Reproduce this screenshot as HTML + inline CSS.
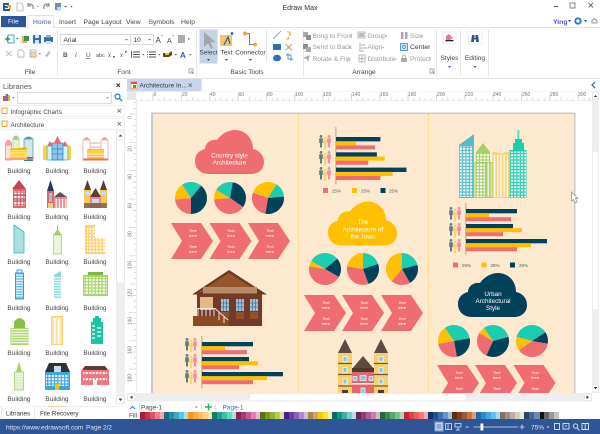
<!DOCTYPE html>
<html><head><meta charset="utf-8"><style>
html,body{margin:0;padding:0;background:#fff}
svg{display:block;font-family:"Liberation Sans",sans-serif}
.s{fill:none;stroke-width:16}
.n{stroke:#02415a}.c{stroke:#ef6c71}.y{stroke:#ffc000}.t{stroke:#1ccdb0}
.w{fill:#fff;text-anchor:middle}
.tt{font-size:4px;fill:#fff;text-anchor:middle}
.b{font-size:6.5px;fill:#444;text-anchor:middle}
.r{font-size:5px;fill:#777}
.g{font-size:6.6px;fill:#999}
.k{font-size:6.8px;fill:#333}
.l{font-size:6.6px;fill:#444;text-anchor:middle}
.q{font-size:4.5px;fill:#555}
</style></head><body>
<svg width="600" height="434" viewBox="0 0 600 434" xmlns="http://www.w3.org/2000/svg">
<defs>
<path id="cloud" d="M14 44C5 44 0 38 0 31C0 24 5 20 10 19C10 13 16 9 22 10C27 3 34 0 40 0C50 0 58 8 58 19C64 20 69 25 69 32C69 39 64 44 56 44Z"/>
<g id="chev"><path fill="#ef6c71" d="M0 0H30L42 18L30 36H0L11 18Z"/></g>
<g id="per"><circle cx="0" cy="1.4" r="1.4"/><path d="M-1.8 3.2H1.8V8H1V12.5H-1V8H-1.8Z"/></g>
<g id="ppl">
<use href="#per" x="0" fill="#5c7c80"/><use href="#per" x="4" y="1.5" fill="#fbd36e"/><use href="#per" x="8" fill="#f58aa0"/>
</g>
<g id="bars">
<rect y="0" width="51" height="4.3" fill="#02415a"/><rect y="4.2" width="23" height="4" fill="#ffc000"/><rect y="8.2" width="45" height="4" fill="#ef6c71"/>
<rect y="15" width="47" height="4.3" fill="#02415a"/><rect y="19.2" width="56" height="4" fill="#ffc000"/><rect y="23.2" width="37" height="4" fill="#ef6c71"/>
<rect y="30" width="81" height="4.3" fill="#02415a"/><rect y="34.2" width="65" height="4" fill="#ffc000"/><rect y="38.2" width="51" height="4" fill="#ef6c71"/>
</g>
<pattern id="gW" width="3.4" height="3.2" patternUnits="userSpaceOnUse"><rect x=".7" y=".6" width="2.2" height="2" fill="#fff"/></pattern>
<pattern id="gS" width="2.6" height="2.6" patternUnits="userSpaceOnUse"><rect y="1.5" width="2.6" height="1.1" fill="#fff"/></pattern>
<pattern id="gV" width="3.2" height="9" patternUnits="userSpaceOnUse"><rect x="1.2" width="1.2" height="9" fill="#fff"/></pattern>
<pattern id="rT" width="28.35" height="9" patternUnits="userSpaceOnUse"><path d="M.5 2V9M6.2 7V9M11.8 6V9M17.5 7V9M23.2 7V9" stroke="#bbb" stroke-width=".6"/></pattern>
<pattern id="rV" width="9" height="28.35" patternUnits="userSpaceOnUse"><path d="M2 .5H9M7 6.2H9M6 11.8H9M7 17.5H9M7 23.2H9" stroke="#bbb" stroke-width=".6"/></pattern>
<clipPath id="pg"><rect x="152" y="114" width="422" height="279"/></clipPath>
</defs>

<rect width="600" height="434" fill="#fff"/>

<!-- quick access -->
<path fill="#2f5597" d="M3 3H9V5H5V6H8V8H5V9H10V11H3Z"/><path fill="#f0a030" d="M7 5H11V9H9V7H7Z"/>
<path fill="#fff" stroke="#b0b0b0" stroke-width=".8" d="M17 3H21L23 5V11H17Z"/>
<path fill="none" stroke="#8a8a8a" stroke-width="1.2" d="M28 5C31 3 34 5 33 9M28 3V6H31"/>
<path fill="none" stroke="#8a8a8a" stroke-width="1.2" d="M49 5C46 3 43 5 44 9M49 3V6H46"/>
<rect x="37" y="6" width="2" height=".8" fill="#999"/>
<rect x="55" y="3" width="6" height="7" fill="#6d8fc0"/><rect x="57" y="7" width="4" height="4" fill="#c8d6ea"/>
<path fill="#555" d="M64 6H67L65.500 7.500ZM70.500 6H72.500L71.500 7.500Z"/>
<text x="300" y="10" font-size="7" fill="#333" text-anchor="middle">Edraw Max</text>
<rect x="554" y="6" width="4" height="1" fill="#555"/>
<rect x="570" y="3" width="5" height="5" fill="none" stroke="#666" stroke-width=".8"/>
<path d="M588.500 3L593 7.500M593 3L588.500 7.500" stroke="#666" stroke-width=".9"/>

<!-- tabs -->
<rect x="1" y="16" width="25" height="11" fill="#2f5597"/>
<text x="8" y="23.500" font-size="6.6" fill="#fff">File</text>
<path d="M0 27.500H28V15.500H53.500V27.500H600" fill="none" stroke="#dcdcdc" stroke-width=".8"/>
<text x="33" y="24" font-size="6.8" fill="#3b5fa0">Home</text>
<g font-size="6.8" fill="#444"><text x="59" y="24">Insert</text><text x="83.500" y="24">Page Layout</text><text x="126" y="24">View</text><text x="148.500" y="24">Symbols</text><text x="181" y="24">Help</text></g>
<text x="553" y="24" font-size="6.8" fill="#4a50e0" font-weight="bold">Ying</text>
<path d="M568 20H571L569.500 22Z" fill="#444"/>
<circle cx="578" cy="21" r="2.700" fill="none" stroke="#2a78c8" stroke-width="1.900"/>
<path d="M584 20H587L585.500 22Z" fill="#444"/>
<path d="M592 23V20.500L594.500 18.500L597 20.500V23Z" fill="none" stroke="#777" stroke-width=".8"/>

<!-- ribbon -->
<path d="M0 78.500H600" stroke="#dcdcdc" stroke-width=".8"/>
<path d="M57.500 30V76M196.500 30V76M266.500 30V62M303.500 30V76M436.500 30V76M460.500 30V76M488.500 30V76" stroke="#e2e2e2" stroke-width=".8"/>
<!-- file group icons -->
<rect x="8" y="35" width="6" height="8" fill="#fff" stroke="#3a8fc8" stroke-width=".9"/><path d="M5 39H10M7.500 36.500V41.500" stroke="#19a35a" stroke-width="1.500"/>
<path d="M16 38H18.500L17.250 39.500Z" fill="#555"/>
<path d="M22 36H27V43H22Z" fill="#f3b13c"/><path d="M24 36H29V41H24Z" fill="#3e8f60"/>
<rect x="33" y="35" width="8" height="8.500" fill="#2f6fb5"/><rect x="35" y="35" width="4" height="3" fill="#d6e4f2"/><rect x="35" y="40" width="4" height="3.500" fill="#d6e4f2"/>
<rect x="44" y="37" width="9" height="5" fill="#2f6fb5"/><rect x="46" y="35" width="5" height="2.500" fill="#9ab"/><rect x="46" y="41" width="5" height="3" fill="#cfe0ef"/>
<g fill="none" stroke="#bbb" stroke-width=".9"><path d="M6 51L12 56M12 51L6 56"/><path d="M18 50H22L24 52V57H18Z"/><path d="M30 50H36V57H30Z"/></g>
<rect x="31" y="52" width="5" height="5" fill="#f3d9a0" stroke="#999" stroke-width=".5"/>
<path d="M38.500 53H41L39.750 54.500Z" fill="#777"/>
<path d="M45 56L49 51L50.500 52.500L47 57Z" fill="#bbb"/>
<text class="l" x="30" y="74">File</text>
<!-- font -->
<rect x="60.500" y="34.500" width="93" height="10" fill="#fff" stroke="#d0d0d0" stroke-width=".8"/>
<path d="M130.500 34.500V44.500" stroke="#d0d0d0" stroke-width=".8"/>
<text x="63.500" y="41.800" font-size="6.500" fill="#333">Arial</text>
<text x="133.500" y="41.800" font-size="6.500" fill="#333">10</text>
<path d="M125 39H128L126.500 40.500ZM148 39H151L149.500 40.500Z" fill="#777"/>
<text x="155.500" y="43" font-size="8" fill="#444">A</text><text x="161" y="37" font-size="4" fill="#444">^</text>
<text x="167" y="43" font-size="7" fill="#444">A</text><text x="172" y="37" font-size="4" fill="#444">˅</text>
<path d="M178 36H185M178 38H185M178 40H185M178 42H185" stroke="#555" stroke-width="1.100"/><path d="M187.500 38.500H190L188.700 40Z" fill="#555"/>
<g fill="#555" font-size="6.500"><text x="63" y="57" font-weight="bold">B</text><text x="75" y="57" font-style="italic">I</text><text x="86" y="57" text-decoration="underline">U</text><text x="96" y="57" font-size="5.500">abc</text><text x="108" y="57" font-size="6">x</text><text x="120" y="57" font-size="6">x</text></g>
<rect x="113" y="56" width="1.600" height="1.600" fill="#555"/><rect x="125" y="51" width="1.600" height="1.600" fill="#555"/>
<path d="M133 52H140M133 54.500H140M133 57H140" stroke="#555" stroke-width=".9"/><path d="M131.500 51V58" stroke="#2a78c8" stroke-width="1"/>
<path d="M142 54H144.500L143.250 55.500ZM158 54H160.500L159.250 55.500ZM174.500 54H177L175.750 55.500ZM189 54H191.500L190.250 55.500Z" fill="#666"/>
<path d="M149 52H156M149 54.500H156M149 57H156" stroke="#555" stroke-width=".9"/><path d="M147 52H148M147 54.500H148M147 57H148" stroke="#2a78c8" stroke-width="1"/>
<path d="M163 53H169L172 51V55L169 57H163Z" fill="#4a4a3a"/><rect x="165" y="53" width="4" height="2" fill="#ffc000"/>
<text x="180" y="58" font-size="8" fill="#2f5fa8" font-weight="bold">A</text>
<text class="l" x="124" y="74">Font</text>
<path d="M189 69H193V73H189ZM191 71L194 74" fill="none" stroke="#888" stroke-width=".7"/>
<!-- basic tools -->
<rect x="199.500" y="29.500" width="18" height="34" fill="#c4d3e7"/>
<path d="M204 32L204 47L208 43.500L211 49L213 48L210.500 42.500L215.500 42Z" fill="#a3a6ab"/>
<text class="l" x="208.500" y="54.500">Select</text><path d="M207 59H210L208.500 61Z" fill="#444"/>
<rect x="220" y="35" width="12" height="11" fill="#f5c46c"/>
<path d="M224 45L228 37L230 44" fill="none" stroke="#2f5fa8" stroke-width="1.200"/>
<circle cx="232" cy="33.500" r="1.400" fill="#2f5fa8"/>
<text class="l" x="226.500" y="54.500">Text</text><path d="M225 59H228L226.500 61Z" fill="#444"/>
<path d="M245 33.500H249.500V44.500H254" fill="none" stroke="#2f5fa8" stroke-width=".8"/>
<circle cx="245" cy="33.500" r="2" fill="#f5a623"/><circle cx="255" cy="44.500" r="2" fill="#f5a623"/>
<text class="l" x="250.500" y="54.500">Connector</text><path d="M249 59H252L250.500 61Z" fill="#444"/>
<path d="M273 39L281 31" stroke="#7aa7d8" stroke-width=".9"/>
<path d="M287 32H290V35H288.500M288.500 37V39H286" fill="none" stroke="#f5a623" stroke-width="1.100"/>
<rect x="273" y="44" width="8" height="6" fill="#2f6fb5"/>
<path d="M285.500 44L292 50.500M292 44L285.500 50.500" stroke="#8aa8c8" stroke-width=".9"/><circle cx="288.700" cy="47.200" r="1.500" fill="#f5a623"/>
<ellipse cx="277" cy="58" rx="4" ry="3.300" fill="#2f6fb5"/>
<path d="M286 55H291V61M288 53V59H293" fill="none" stroke="#5a8ab8" stroke-width=".9"/>
<text class="l" x="247" y="74">Basic Tools</text>
<!-- arrange -->
<g fill="#a8a8a8">
<rect x="303" y="32" width="5" height="5"/><rect x="306" y="35" width="5" height="5" fill="#8e8e8e"/>
<rect x="303" y="44" width="5" height="5" fill="#8e8e8e"/><rect x="306" y="47" width="5" height="5"/>
<path d="M303 58L310 55L308 62L307 59Z"/>
</g>
<text class="g" x="312.500" y="38">Bring to Front</text><text class="g" x="312.500" y="49">Send to Back</text><text class="g" x="312.500" y="61">Rotate &amp; Flip</text>
<path d="M349 35.500H351.500L350.250 37ZM349 47H351.500L350.250 48.500ZM347 58.500H349.500L348.250 60Z" fill="#aaa"/>
<rect x="359" y="33" width="5" height="4" fill="#bbb"/><rect x="358" y="32" width="7" height="6" fill="none" stroke="#999" stroke-width=".7"/>
<path d="M360 43V52M361 45H365M361 48H367M361 51H364" stroke="#aaa" stroke-width=".9" fill="none"/>
<path d="M359 55H365V62H359ZM362 55V62M359 58.500H365" stroke="#aaa" stroke-width=".8" fill="none"/>
<text class="g" x="367.500" y="38">Group</text><text class="g" x="367.500" y="49">Align</text><text class="g" x="367.500" y="61">Distribute</text>
<path d="M385 35.500H387.500L386.250 37ZM382 47H384.500L383.250 48.500ZM394.500 58.500H397L395.750 60Z" fill="#aaa"/>
<rect x="401" y="32" width="2.500" height="7" fill="#aaa"/><rect x="405" y="32" width="2.500" height="7" fill="#aaa"/>
<rect x="400.500" y="43.500" width="7" height="7" fill="#cfe2f5" stroke="#3a86c8" stroke-width=".8"/><circle cx="404" cy="47" r="1.500" fill="none" stroke="#3a86c8" stroke-width=".7"/>
<rect x="401" y="58" width="6" height="4" fill="#aaa"/><path d="M402.500 58V56.500A1.500 1.500 0 0 1 405.500 56.500V58" fill="none" stroke="#aaa" stroke-width=".8"/>
<text class="g" x="410" y="38">Size</text><text class="k" x="410" y="49">Center</text><text class="g" x="410" y="61">Protect</text>
<path d="M421 35.500H423.500L422.250 37ZM429 58.500H431.500L430.250 60Z" fill="#aaa"/>
<text class="l" x="364" y="74">Arrange</text>
<path d="M430 69H434V73H430ZM432 71L435 74" fill="none" stroke="#888" stroke-width=".7"/>
<!-- styles / editing -->
<rect x="443" y="32" width="13" height="12" fill="#fff" stroke="#e4e4e4" stroke-width=".7"/>
<path d="M446 36L449 34L453 38L450 40H446Z" fill="#e6788c"/><rect x="445.500" y="40" width="8" height="1.300" fill="#222"/>
<text class="l" x="449.500" y="60">Styles</text><path d="M448 66H451L449.500 68Z" fill="#2f5fa8"/>
<rect x="468" y="32" width="14" height="12" fill="#fff" stroke="#e4e4e4" stroke-width=".7"/>
<path d="M471 42L472 35H474.500V38H475.500V35H478L479 42H476V39.500H474V42Z" fill="#2f5597"/>
<text class="l" x="475" y="60">Editing</text><path d="M473.500 66H476.500L475 68Z" fill="#2f5fa8"/>

<!-- left panel -->
<text x="3" y="89" font-size="7.500" fill="#555">Libraries</text>
<path d="M116.500 83.500L120 87M120 83.500L116.500 87" stroke="#333" stroke-width="1"/>
<rect x="3" y="96" width="2.500" height="5" fill="#e05050"/><rect x="5.500" y="94" width="2.500" height="7" fill="#4a7fc8"/><rect x="8" y="95" width="2" height="6" fill="#f5a623"/>
<path d="M12 97H14.500L13.250 98.500Z" fill="#777"/>
<rect x="17.500" y="92.500" width="94" height="11" fill="#fff" stroke="#d4d4d4" stroke-width=".8"/>
<path d="M106 97.500H109L107.500 99Z" fill="#777"/>
<circle cx="117.500" cy="96.500" r="2.500" fill="none" stroke="#2a78c8" stroke-width="1.200"/><path d="M119.500 98.500L122 101" stroke="#2a78c8" stroke-width="1.300"/>
<rect x=".5" y="105.500" width="124" height="11" fill="#fff" stroke="#ececec" stroke-width=".7"/>
<rect x=".5" y="118.500" width="124" height="11" fill="#fff" stroke="#ececec" stroke-width=".7"/>
<rect x="2" y="108" width="5" height="5.500" fill="#fff" stroke="#f0a030" stroke-width="1"/><rect x="2" y="121" width="5" height="5.500" fill="#fff" stroke="#f0a030" stroke-width="1"/>
<text x="10.500" y="114" font-size="6.300" fill="#444">Infographic Charts</text>
<text x="10.500" y="127" font-size="6.300" fill="#444">Architecture</text>
<path d="M117.500 109L121 112.500M121 109L117.500 112.500M117.500 122L121 125.500M121 122L117.500 125.500" stroke="#666" stroke-width=".8"/>
<!-- lib scrollbar -->
<rect x="116" y="131" width="9" height="273" fill="#eee"/>
<rect x="116.500" y="131" width="8" height="152" fill="#fff" stroke="#e0e0e0" stroke-width=".6"/>
<rect x="116.500" y="131" width="8" height="9" fill="#fff" stroke="#ddd" stroke-width=".6"/>
<path d="M118.500 136.500H122.500L120.500 134.500Z" fill="#444"/>
<rect x="116.500" y="396" width="8" height="8" fill="#fff" stroke="#ddd" stroke-width=".6"/>
<path d="M118.500 398.500H122.500L120.500 401Z" fill="#444"/>

<!-- thumbnails -->
<g>
<g fill="#fce0e0" stroke="#f08a90" stroke-width=".8"><rect x="5.500" y="143" width="6" height="17"/></g><circle cx="8.500" cy="143" r="3" fill="#f5a0a5"/>
<rect x="13" y="138" width="6" height="12" fill="#e5f2dc" stroke="#a8d08c" stroke-width=".8"/><circle cx="16" cy="138" r="2.500" fill="#a8d08c"/>
<rect x="24" y="139" width="9" height="20" fill="#cfe6ea" stroke="#5a9aa8" stroke-width=".8"/><path d="M24 139Q28.500 134 33 139Z" fill="#5a9aa8"/><rect x="24" y="157" width="9" height="4" fill="#3a7f90"/>
<rect x="10" y="149" width="17" height="11" fill="#ffd23a"/><path d="M10 150H27M10 153H27M10 156H27" stroke="#fff" stroke-width=".6"/><path d="M10 149L26 147L27 150H10Z" fill="#f5b800"/><rect x="5" y="158" width="28" height="2" fill="#f08a90" opacity=".6"/>
</g>
<g>
<rect x="43" y="146" width="6" height="14" fill="#ffd23a"/><rect x="66" y="146" width="5" height="14" fill="#ffd23a"/>
<rect x="47" y="146" width="7" height="14" fill="#d8f0ee" stroke="#33b0a8" stroke-width=".7"/><rect x="61" y="146" width="7" height="14" fill="#d8f0ee" stroke="#33b0a8" stroke-width=".7"/>
<rect x="52" y="143" width="11" height="17" fill="#8ec5ec" stroke="#2a8ac8" stroke-width=".7"/><path d="M53 160H62M57.500 143V160M52 149H63M52 154H63" stroke="#2a8ac8" stroke-width=".7"/>
<path d="M47 146L50 141L53 146ZM62 146L65 141L68 146ZM54 143L57.500 136L61 143Z" fill="#f0666a"/>
</g>
<g>
<rect x="83" y="140" width="7" height="20" fill="#fff" stroke="#f5a3a6" stroke-width=".8"/><rect x="101" y="140" width="7" height="20" fill="#fff" stroke="#f5a3a6" stroke-width=".8"/>
<path d="M83 140Q86.500 134 90 140ZM101 140Q104.500 134 108 140Z" fill="#f5a3a6"/><path d="M90 143H101M90 147H101" stroke="#f5a3a6"/>
<rect x="87" y="151" width="17" height="8" fill="#ffd23a"/><path d="M87 150H104" stroke="#f5b800" stroke-width="1.500"/><path d="M87 154H104M87 156.500H104" stroke="#fff" stroke-width=".5"/>
<rect x="83" y="158.500" width="25" height="2" fill="#f0666a"/>
</g>
<g>
<rect x="13" y="189" width="13" height="19" fill="#e0686c"/><path d="M12 189L19 180L26 189Z" fill="#c24850"/><rect x="14" y="191" width="11" height="15" fill="url(#gW)"/><path d="M13 195H26M13 200H26" stroke="#445" stroke-width=".7"/>
</g>
<g>
<rect x="47" y="191" width="7" height="17" fill="#e0686c"/><path d="M47 191L50.500 180L54 191Z" fill="#2b3a5c"/><rect x="49" y="193" width="3" height="9" fill="#8ec5ec"/><rect x="48" y="203" width="5" height="5" fill="#f8cf6c"/>
<rect x="54" y="197" width="13" height="11" fill="#f08a8a"/><path d="M54 197L60 192L67 197Z" fill="#555"/><rect x="54" y="199" width="13" height="9" fill="url(#gV)"/>
</g>
<g>
<rect x="84" y="190" width="7" height="18" fill="#f5c860"/><rect x="100" y="190" width="7" height="18" fill="#f5c860"/><rect x="90" y="197" width="11" height="11" fill="#f08a8a"/>
<path d="M84 190L87.500 180L91 190ZM100 190L103.500 180L107 190ZM90 197L95.500 188L101 197Z" fill="#5b3f35"/>
<rect x="85" y="192" width="5" height="3" fill="#bfe0f2"/><rect x="101" y="192" width="5" height="3" fill="#bfe0f2"/><rect x="92" y="199" width="7" height="4" fill="#bfe0f2"/><rect x="84" y="203" width="23" height="5" fill="#6b5040" opacity=".7"/>
</g>
<path d="M14 225L24 232V253H14Z" fill="#abe0e0" stroke="#3ab8b8" stroke-width=".8"/>
<g><rect x="53.500" y="235" width="8" height="19" fill="#e4f2d4" stroke="#a2d06c" stroke-width=".7"/><path d="M53 235L57.500 229L62 235Z" fill="#a2d06c"/><rect x="57" y="225" width="1" height="5" fill="#a2d06c"/><rect x="54" y="236" width="7" height="17" fill="url(#gS)" opacity=".5"/></g>
<g><path d="M85 225H95V238H105V254H85Z" fill="#fcd070"/><rect x="87" y="227" width="18" height="26" fill="url(#gW)" opacity=".9"/></g>
<g><rect x="15.500" y="273" width="8" height="26" fill="#6cbcec" stroke="#2088c8" stroke-width=".8"/><rect x="17" y="270" width="5" height="3" fill="none" stroke="#2088c8" stroke-width=".8"/><rect x="16" y="274" width="7" height="24" fill="url(#gS)"/></g>
<g><path d="M54 275L61 271V298H54Z" fill="#8ed8dc"/><rect x="54" y="276" width="7" height="22" fill="url(#gS)"/></g>
<g><rect x="83" y="275" width="25" height="21" fill="#a8d468"/><rect x="88" y="272" width="15" height="3" fill="#7fb848"/><rect x="84" y="277" width="23" height="18" fill="url(#gW)"/></g>
<g><rect x="10.500" y="328" width="18" height="17" fill="#a8d468"/><path d="M14 328V322Q19.500 314 25 322V328Z" fill="#84c04a"/><rect x="11" y="329" width="17" height="15" fill="url(#gS)"/></g>
<g><rect x="51.500" y="316.500" width="11" height="28" fill="#fde3a0" stroke="#fcc860" stroke-width=".8"/><rect x="54" y="318" width="1.500" height="26" fill="#fff"/><rect x="58" y="318" width="1.500" height="26" fill="#fff"/></g>
<g><rect x="91" y="322" width="12" height="22" fill="#1ac4a4"/><path d="M93 322V318H95V316H99V318H101V322Z" fill="#1ac4a4"/><path d="M92 326H95M92 330H95M92 334H95M92 338H95M97 328H101M97 332H101M97 336H101" stroke="#fff" stroke-width="1.200"/></g>
<g><rect x="14.500" y="372" width="9" height="18" fill="#d8ecbf" stroke="#a2d06c" stroke-width=".8"/><path d="M16 372L19 362L22 372Z" fill="#a2d06c"/><rect x="15" y="373" width="8" height="16" fill="url(#gS)" opacity=".6"/></g>
<g><rect x="45" y="372" width="25" height="18" fill="#3aa4e4"/><path d="M45 372L49 363H66L70 372Z" fill="#33302e"/><rect x="54" y="366" width="7" height="6" fill="#bfe0f2"/><rect x="46" y="374" width="23" height="12" fill="url(#gW)"/><rect x="55" y="384" width="4" height="6" fill="#ffc000"/></g>
<g><rect x="81" y="370" width="28" height="15" fill="#f0777c"/><path d="M82 370L85 366H105L108 370Z" fill="#5b3f35"/><rect x="83" y="372" width="24" height="3" fill="url(#gW)"/><rect x="83" y="378" width="24" height="3" fill="url(#gW)"/><rect x="93" y="380" width="4" height="5" fill="#fff"/></g>

<g class="b">
<text class="b" x="19" y="173">Building</text><text class="b" x="57" y="173">Building</text><text class="b" x="95" y="173">Building</text>
<text class="b" x="19" y="219">Building</text><text class="b" x="57" y="219">Building</text><text class="b" x="95" y="219">Building</text>
<text class="b" x="19" y="264">Building</text><text class="b" x="57" y="264">Building</text><text class="b" x="95" y="264">Building</text>
<text class="b" x="19" y="310">Building</text><text class="b" x="57" y="310">Building</text><text class="b" x="95" y="310">Building</text>
<text class="b" x="19" y="355">Building</text><text class="b" x="57" y="355">Building</text><text class="b" x="95" y="355">Building</text>
<text class="b" x="19" y="401">Building</text><text class="b" x="57" y="401">Building</text><text class="b" x="95" y="401">Building</text>
</g>
<!-- lib tabs -->
<path d="M0 406.500H126" stroke="#e4e4e4" stroke-width=".6"/>
<path d="M1.500 406.500V418.500H34.500V406.500" fill="#fff" stroke="#ddd" stroke-width=".6"/>
<rect x="48" y="406" width="18" height="1" fill="#fbd09a"/>
<text x="6" y="415.500" font-size="6.300" fill="#333">Libraries</text>
<text x="40" y="415.500" font-size="6.300" fill="#333">File Recovery</text>

<!-- doc tab -->
<rect x="127" y="79" width="74.500" height="12.500" fill="#c7d6ee"/>
<rect x="131" y="82" width="6" height="6.500" fill="#fff" stroke="#f0a030" stroke-width=".7"/><rect x="131" y="82" width="6" height="2" fill="#e05050"/><rect x="133" y="85" width="3" height="3" fill="#4aa05a"/>
<text x="139.500" y="87.500" font-size="6.500" fill="#333">Architecture In...</text>
<path d="M188.500 83.500L192 87M192 83.500L188.500 87" stroke="#667" stroke-width=".8"/>
<path d="M595 82L592 85L595 88" fill="none" stroke="#2a78c8" stroke-width="1.300"/>
<path d="M127 91.500H600" stroke="#e0e0e0" stroke-width=".6"/>

<!-- rulers -->
<rect x="127" y="92" width="9" height="8" fill="#e8e8e8"/>
<rect x="136" y="91.500" width="456" height="9" fill="#fff"/>
<g transform="translate(152.500 91.500)"><rect x="-16" width="455" height="9" fill="url(#rT)"/></g>
<path d="M136 100.500H592" stroke="#e0e0e0" stroke-width=".6"/>
<g class="r"><text class="r" x="153.500" y="96">0</text><text class="r" x="182" y="96">20</text><text class="r" x="210" y="96">40</text><text class="r" x="238.500" y="96">60</text><text class="r" x="267" y="96">80</text><text class="r" x="295" y="96">100</text><text class="r" x="323" y="96">120</text><text class="r" x="352" y="96">140</text><text class="r" x="380" y="96">160</text><text class="r" x="408" y="96">180</text><text class="r" x="437" y="96">200</text><text class="r" x="465" y="96">220</text><text class="r" x="493" y="96">240</text><text class="r" x="522" y="96">260</text><text class="r" x="550" y="96">280</text><text class="r" x="578" y="96">300</text></g>
<g transform="translate(127 113.500)"><rect y="-13" width="9" height="280" fill="url(#rV)"/></g>
<path d="M136.500 100V393" stroke="#e0e0e0" stroke-width=".6"/>
<g class="r" text-anchor="middle">
<text class="r" transform="translate(131.500 117.500) rotate(-90)">0</text>
<text class="r" transform="translate(131.500 149) rotate(-90)">20</text>
<text class="r" transform="translate(131.500 177) rotate(-90)">40</text>
<text class="r" transform="translate(131.500 205.500) rotate(-90)">60</text>
<text class="r" transform="translate(131.500 234) rotate(-90)">80</text>
<text class="r" transform="translate(131.500 265) rotate(-90)">100</text>
<text class="r" transform="translate(131.500 293) rotate(-90)">120</text>
<text class="r" transform="translate(131.500 321) rotate(-90)">140</text>
<text class="r" transform="translate(131.500 350) rotate(-90)">160</text>
<text class="r" transform="translate(131.500 378) rotate(-90)">180</text>
</g>

<!-- page -->
<rect x="151" y="112.500" width="424.500" height="282" fill="#c9c9c9"/>
<rect x="153" y="114" width="421" height="280" fill="#fde9d0"/>
<path d="M298.500 114V393M428.500 114V393" stroke="#fcd382" stroke-width="1" stroke-dasharray="2.500 1.500"/>

<g clip-path="url(#pg)">
<!-- clouds -->
<use href="#cloud" x="195" y="130" fill="#ef6c71"/>
<use href="#cloud" x="328" y="201.500" fill="#ffc000"/>
<use href="#cloud" x="458" y="273" fill="#02415a"/>
<g font-size="6.300" fill="#fff" text-anchor="middle">
<text class="w" x="229.500" y="157.500">Country style</text><text class="w" x="229.500" y="164.500">Architecture</text>
<text class="w" x="363" y="224">The</text><text class="w" x="363" y="231.500">Architecture of</text><text class="w" x="363" y="238.500">the Town</text>
<text class="w" x="493" y="296">Urban</text><text class="w" x="493" y="303">Architectural</text><text class="w" x="493" y="310">Style</text>
</g>

<!-- pies -->
<g transform="translate(191 198)"><circle class="s t" r="8" pathLength="360" stroke-dasharray="74 360" transform="rotate(236)"/><circle class="s n" r="8" pathLength="360" stroke-dasharray="140 360" transform="rotate(-50)"/><circle class="s c" r="8" pathLength="360" stroke-dasharray="85 360" transform="rotate(90)"/><circle class="s y" r="8" pathLength="360" stroke-dasharray="61 360" transform="rotate(175)"/></g>
<g transform="translate(230 198)"><circle class="s t" r="8" pathLength="360" stroke-dasharray="70 360" transform="rotate(210)"/><circle class="s n" r="8" pathLength="360" stroke-dasharray="115 360" transform="rotate(-80)"/><circle class="s c" r="8" pathLength="360" stroke-dasharray="140 360" transform="rotate(35)"/><circle class="s y" r="8" pathLength="360" stroke-dasharray="35 360" transform="rotate(175)"/></g>
<g transform="translate(268 198)"><circle class="s y" r="8" pathLength="360" stroke-dasharray="102 360" transform="rotate(200)"/><circle class="s t" r="8" pathLength="360" stroke-dasharray="53 360" transform="rotate(-58)"/><circle class="s n" r="8" pathLength="360" stroke-dasharray="105 360" transform="rotate(-5)"/><circle class="s c" r="8" pathLength="360" stroke-dasharray="100 360" transform="rotate(100)"/></g>
<g transform="translate(325 269)"><circle class="s t" r="8" pathLength="360" stroke-dasharray="110 360" transform="rotate(210)"/><circle class="s n" r="8" pathLength="360" stroke-dasharray="70 360" transform="rotate(-40)"/><circle class="s c" r="8" pathLength="360" stroke-dasharray="160 360" transform="rotate(30)"/><circle class="s y" r="8" pathLength="360" stroke-dasharray="20 360" transform="rotate(190)"/></g>
<g transform="translate(363 269)"><circle class="s t" r="8" pathLength="360" stroke-dasharray="72 360" transform="rotate(-90)"/><circle class="s n" r="8" pathLength="360" stroke-dasharray="88 360" transform="rotate(-18)"/><circle class="s c" r="8" pathLength="360" stroke-dasharray="120 360" transform="rotate(70)"/><circle class="s y" r="8" pathLength="360" stroke-dasharray="80 360" transform="rotate(190)"/></g>
<g transform="translate(402 269)"><circle class="s t" r="8" pathLength="360" stroke-dasharray="75 360" transform="rotate(-90)"/><circle class="s n" r="8" pathLength="360" stroke-dasharray="75 360" transform="rotate(-15)"/><circle class="s c" r="8" pathLength="360" stroke-dasharray="70 360" transform="rotate(60)"/><circle class="s y" r="8" pathLength="360" stroke-dasharray="140 360" transform="rotate(130)"/></g>
<g transform="translate(454 341)"><circle class="s t" r="8" pathLength="360" stroke-dasharray="115 360" transform="rotate(235)"/><circle class="s n" r="8" pathLength="360" stroke-dasharray="90 360" transform="rotate(-10)"/><circle class="s c" r="8" pathLength="360" stroke-dasharray="90 360" transform="rotate(80)"/><circle class="s y" r="8" pathLength="360" stroke-dasharray="65 360" transform="rotate(170)"/></g>
<g transform="translate(493 341)"><circle class="s t" r="8" pathLength="360" stroke-dasharray="110 360" transform="rotate(235)"/><circle class="s n" r="8" pathLength="360" stroke-dasharray="130 360" transform="rotate(-15)"/><circle class="s c" r="8" pathLength="360" stroke-dasharray="95 360" transform="rotate(115)"/><circle class="s y" r="8" pathLength="360" stroke-dasharray="25 360" transform="rotate(210)"/></g>
<g transform="translate(532 341)"><circle class="s t" r="8" pathLength="360" stroke-dasharray="132 360" transform="rotate(195)"/><circle class="s n" r="8" pathLength="360" stroke-dasharray="43 360" transform="rotate(-33)"/><circle class="s c" r="8" pathLength="360" stroke-dasharray="135 360" transform="rotate(10)"/><circle class="s y" r="8" pathLength="360" stroke-dasharray="50 360" transform="rotate(145)"/></g>

<!-- chevrons -->
<use href="#chev" x="171" y="223"/><use href="#chev" x="209.500" y="223"/><use href="#chev" x="248" y="223"/>
<use href="#chev" x="304" y="295"/><use href="#chev" x="342" y="295"/><use href="#chev" x="381" y="295"/>
<use href="#chev" x="437" y="365"/><use href="#chev" x="475" y="365"/><use href="#chev" x="513.500" y="365"/>
<text class="tt" x="193" y="232">Text</text><text class="tt" x="193" y="237">here</text><text class="tt" x="193" y="248">Text</text><text class="tt" x="193" y="253">here</text>
<text class="tt" x="231" y="232">Text</text><text class="tt" x="231" y="237">here</text><text class="tt" x="231" y="248">Text</text><text class="tt" x="231" y="253">here</text>
<text class="tt" x="270" y="232">Text</text><text class="tt" x="270" y="237">here</text><text class="tt" x="270" y="248">Text</text><text class="tt" x="270" y="253">here</text>
<text class="tt" x="326" y="304">Text</text><text class="tt" x="326" y="309">here</text><text class="tt" x="326" y="320">Text</text><text class="tt" x="326" y="325">here</text>
<text class="tt" x="364" y="304">Text</text><text class="tt" x="364" y="309">here</text><text class="tt" x="364" y="320">Text</text><text class="tt" x="364" y="325">here</text>
<text class="tt" x="402" y="304">Text</text><text class="tt" x="402" y="309">here</text><text class="tt" x="402" y="320">Text</text><text class="tt" x="402" y="325">here</text>
<text class="tt" x="459" y="374">Text</text><text class="tt" x="459" y="379">here</text><text class="tt" x="459" y="390">Text</text>
<text class="tt" x="497" y="374">Text</text><text class="tt" x="497" y="379">here</text><text class="tt" x="497" y="390">Text</text>
<text class="tt" x="535" y="374">Text</text><text class="tt" x="535" y="379">here</text><text class="tt" x="535" y="390">Text</text>

<!-- bar charts -->
<g transform="translate(202 342)"><rect x="-.5" y="-6" width=".8" height="52" fill="#9a9488"/><use href="#bars"/><use href="#ppl" x="-15" y="-4"/><use href="#ppl" x="-15" y="12"/><use href="#ppl" x="-15" y="28"/></g>
<g transform="translate(336 137)"><rect x="-.5" y="-10" width=".8" height="57" fill="#9a9488"/><use href="#bars" transform="scale(.87 1.02)"/><use href="#ppl" x="-15" y="-2"/><use href="#ppl" x="-15" y="14"/><use href="#ppl" x="-15" y="30"/></g>
<g transform="translate(466 209)"><rect x="-.5" y="-6" width=".8" height="52" fill="#9a9488"/><use href="#bars"/><use href="#ppl" x="-15" y="-2"/><use href="#ppl" x="-15" y="14"/><use href="#ppl" x="-15" y="30"/></g>
<!-- legends -->
<rect x="323" y="188" width="5" height="5" fill="#ef6c71"/><rect x="352" y="188" width="5" height="5" fill="#ffc000"/><rect x="380.500" y="188" width="5" height="5" fill="#02415a"/>
<text class="q" x="332" y="192.500">25%</text><text class="q" x="361" y="192.500">25%</text><text class="q" x="389" y="192.500">25%</text>
<rect x="453" y="262.500" width="5" height="5" fill="#ef6c71"/><rect x="481.500" y="262.500" width="5" height="5" fill="#ffc000"/><rect x="510" y="262.500" width="5" height="5" fill="#02415a"/>
<text class="q" x="462" y="267">25%</text><text class="q" x="490.500" y="267">25%</text><text class="q" x="519" y="267">25%</text>

<!-- house -->
<rect x="197" y="293" width="65" height="33" fill="#75392a"/>
<path d="M192 294.500L229 270L267 294.500Z" fill="#6b3a1c"/><path d="M199 292L229 273L259 292Z" fill="#96552a"/>
<rect x="203" y="287" width="54" height="6.500" fill="#b88a68"/>
<rect x="200" y="297" width="13" height="13" fill="#e3b98a"/>
<g fill="#9cc3dc"><rect x="221" y="299" width="8" height="12"/><rect x="236" y="299" width="8" height="12"/><rect x="250" y="299" width="8" height="12"/></g>
<path d="M223.700 299V311M226.400 299V311M238.700 299V311M241.400 299V311M252.700 299V311M255.400 299V311M221 303H229M221 307H229M236 303H244M236 307H244M250 303H258M250 307H258" stroke="#33495a" stroke-width=".5"/>
<g fill="#94502a"><rect x="221" y="312" width="8" height="7"/><rect x="236" y="312" width="8" height="7"/><rect x="250" y="312" width="8" height="7"/></g>
<rect x="193" y="316" width="36" height="10" fill="#8c4a24"/>
<path d="M193.500 308.500H215L228 320M194 308.500V316M198 308.500V316M202 308.500V316M206 308.500V316M210 308.500V316M214 308.500V316M219 312V320M224 317V323" fill="none" stroke="#ece8e0" stroke-width="1"/>

<!-- church -->
<rect x="338" y="353" width="14" height="42" fill="#f9cf6e"/><rect x="374" y="353" width="14" height="42" fill="#f9cf6e"/>
<path d="M338 353L345 339L352 353ZM374 353L381 339L388 353Z" fill="#5e4a43"/>
<path d="M338 363.500H352M338 374.500H352M338 386H352M374 363.500H388M374 374.500H388M374 386H388" stroke="#6e5a38" stroke-width="1.200"/>
<rect x="352" y="372" width="22" height="23" fill="#e8636a"/>
<path d="M352 369L363 356L374 369V372H352Z" fill="#5e4a43"/><rect x="352" y="368" width="22" height="4" fill="#4a3a34"/>
<rect x="352" y="383" width="22" height="1.500" fill="#fff"/>
<g fill="#7fc8ef" stroke="#fff" stroke-width=".7"><rect x="343" y="356.500" width="4" height="5"/><rect x="343" y="367.500" width="4" height="5"/><rect x="343" y="379" width="4" height="5"/><rect x="379" y="356.500" width="4" height="5"/><rect x="379" y="367.500" width="4" height="5"/><rect x="379" y="379" width="4" height="5"/><rect x="360" y="375.500" width="6" height="5"/><rect x="353" y="376.500" width="4" height="4"/><rect x="369" y="376.500" width="4" height="4"/><rect x="361" y="388" width="4" height="6"/></g>
<rect x="342" y="390" width="6" height="4" fill="#4a3a34"/><rect x="378" y="390" width="6" height="4" fill="#4a3a34"/>

<!-- city -->
<path d="M459 145L474 134V198H459Z" fill="#54bcc5"/><rect x="459.500" y="146" width="14" height="51" fill="url(#gW)"/>
<path d="M476 152L483 143L490 152Z" fill="#a6d06a"/><rect x="476" y="152" width="14" height="11" fill="#a6d06a"/><rect x="474.500" y="162" width="18" height="36" fill="#a6d06a"/><rect x="477" y="153" width="12" height="9" fill="url(#gW)"/><rect x="475" y="163" width="10" height="34" fill="url(#gW)"/><rect x="486" y="163" width="5.500" height="34" fill="url(#gV)"/>
<rect x="492.500" y="153" width="16.500" height="45" fill="#fcd47e"/><rect x="492.500" y="152" width="5" height="2" fill="#fcd47e"/><rect x="504" y="152" width="5" height="2" fill="#fcd47e"/><rect x="494" y="155" width="14" height="42" fill="url(#gV)"/>
<rect x="517.500" y="130" width="1.800" height="10" fill="#56d8c4"/><path d="M513 150V143H515V139H522V143H524V150Z" fill="#1ccdb0"/><rect x="509.500" y="150" width="17" height="48" fill="#1ccdb0"/><rect x="510" y="151.500" width="16" height="46" fill="url(#gW)"/>
</g>

<!-- cursor -->
<path d="M571.500 192V201L573.500 199.500L575 203L577 202L575.500 198.500L578 198.500Z" fill="#fff" stroke="#8a8a8a" stroke-width=".7"/>

<!-- v scrollbar -->
<rect x="592" y="92" width="7" height="301" fill="#eee"/>
<rect x="592.500" y="151" width="6" height="159" fill="#fff" stroke="#ddd" stroke-width=".5"/>
<rect x="592.500" y="92" width="6" height="7" fill="#fff" stroke="#ddd" stroke-width=".5"/><path d="M593.800 97H597.200L595.500 95Z" fill="#333"/>
<rect x="592.500" y="385" width="6" height="7" fill="#fff" stroke="#ddd" stroke-width=".5"/><path d="M593.800 387H597.200L595.500 389.500Z" fill="#333"/>
<!-- h scrollbar -->
<rect x="127" y="393" width="465" height="8.500" fill="#eee"/>
<rect x="249.500" y="393.500" width="217" height="7.500" fill="#fff" stroke="#ddd" stroke-width=".5"/>
<rect x="127.500" y="394" width="7" height="6.500" fill="#fff" stroke="#ddd" stroke-width=".5"/><path d="M132.500 395.500V399L130 397.200Z" fill="#333"/>
<rect x="584.500" y="394" width="7" height="6.500" fill="#fff" stroke="#ddd" stroke-width=".5"/><path d="M586.500 395.500V399L589 397.200Z" fill="#333"/>

<!-- page tabs -->
<path d="M130 409L132.500 406.500L135 409" fill="none" stroke="#2a78c8" stroke-width="1"/>
<path d="M139.500 403V411" stroke="#bbb" stroke-width=".6"/>
<text x="141" y="409.500" font-size="6.500" fill="#444">Page-1</text>
<path d="M195 406.500H197.500L196.250 408Z" fill="#666"/>
<path d="M201.500 404V410M215.500 404V410" stroke="#ccc" stroke-width=".6"/>
<path d="M205 407H212M208.500 403.500V410.500" stroke="#1fb35a" stroke-width="1.400"/>
<text x="222.500" y="409.500" font-size="6.500" fill="#3a66c0">Page-1</text>

<!-- Fill + swatches -->
<text x="129" y="417.500" font-size="6.300" fill="#444">Fill</text>
<g shape-rendering="crispEdges">
<g transform="translate(140 412)"><rect width="5" height="7" fill="#a31d36"/><rect x="5" width="5" height="7" fill="#c9304b"/><rect x="10" width="5" height="7" fill="#e0526a"/><rect x="15" width="5" height="7" fill="#ec7d8e"/><rect x="20" width="4" height="7" fill="#f3a7b3"/></g>
<g transform="translate(164 412)"><rect width="5" height="7" fill="#1d6a7e"/><rect x="5" width="5" height="7" fill="#2b8ba0"/><rect x="10" width="5" height="7" fill="#3fa9bd"/><rect x="15" width="5" height="7" fill="#6cc5d5"/><rect x="20" width="4" height="7" fill="#a5e2ec"/></g>
<g transform="translate(188 412)"><rect width="5" height="7" fill="#f39a1e"/><rect x="5" width="5" height="7" fill="#f7ad3c"/><rect x="10" width="5" height="7" fill="#fac060"/><rect x="15" width="5" height="7" fill="#fcd180"/><rect x="20" width="4" height="7" fill="#fde3a8"/></g>
<g transform="translate(212 412)"><rect width="5" height="7" fill="#0f7d6a"/><rect x="5" width="5" height="7" fill="#1fa088"/><rect x="10" width="5" height="7" fill="#3ac2a8"/><rect x="15" width="5" height="7" fill="#6dd4bf"/><rect x="20" width="4" height="7" fill="#a6e5d8"/></g>
<g transform="translate(236 412)"><rect width="5" height="7" fill="#8e1f55"/><rect x="5" width="5" height="7" fill="#ab3a75"/><rect x="10" width="5" height="7" fill="#c45a94"/><rect x="15" width="5" height="7" fill="#dc7fb4"/><rect x="20" width="4" height="7" fill="#efb4d4"/></g>
<g transform="translate(260 412)"><rect width="5" height="7" fill="#5a7314"/><rect x="5" width="5" height="7" fill="#7d961e"/><rect x="10" width="5" height="7" fill="#9cb236"/><rect x="15" width="5" height="7" fill="#b8cb5c"/><rect x="20" width="4" height="7" fill="#d7e29a"/></g>
<g transform="translate(284 412)"><rect width="5" height="7" fill="#4a1f82"/><rect x="5" width="5" height="7" fill="#6b3f9e"/><rect x="10" width="5" height="7" fill="#8b62b6"/><rect x="15" width="5" height="7" fill="#ab8ccd"/><rect x="20" width="4" height="7" fill="#cdbce2"/></g>
<g transform="translate(308 412)"><rect width="5" height="7" fill="#a8864e"/><rect x="5" width="5" height="7" fill="#c8a96e"/><rect x="10" width="5" height="7" fill="#f5d000"/><rect x="15" width="5" height="7" fill="#fae04a"/><rect x="20" width="4" height="7" fill="#fdf09a"/></g>
<g transform="translate(332 412)"><rect width="5" height="7" fill="#006d66"/><rect x="5" width="5" height="7" fill="#13908a"/><rect x="10" width="5" height="7" fill="#3fb0a8"/><rect x="15" width="5" height="7" fill="#7ccac4"/><rect x="20" width="4" height="7" fill="#b2e2de"/></g>
<g transform="translate(356 412)"><rect width="5" height="7" fill="#6b2458"/><rect x="5" width="5" height="7" fill="#8a4074"/><rect x="10" width="5" height="7" fill="#a85f92"/><rect x="15" width="5" height="7" fill="#c283ad"/><rect x="20" width="4" height="7" fill="#dcaed0"/></g>
<g transform="translate(380 412)"><rect width="5" height="7" fill="#1f6b3a"/><rect x="5" width="5" height="7" fill="#3b8a52"/><rect x="10" width="5" height="7" fill="#5ba76f"/><rect x="15" width="5" height="7" fill="#80c08e"/><rect x="20" width="4" height="7" fill="#aed7b6"/></g>
<g transform="translate(404 412)"><rect width="5" height="7" fill="#c2272d"/><rect x="5" width="5" height="7" fill="#de4046"/><rect x="10" width="5" height="7" fill="#ef5b5f"/><rect x="15" width="5" height="7" fill="#f67d7f"/><rect x="20" width="4" height="7" fill="#fbaaa5"/></g>
<g transform="translate(428 412)"><rect width="5" height="7" fill="#12306e"/><rect x="5" width="5" height="7" fill="#234d8f"/><rect x="10" width="5" height="7" fill="#3e6fb0"/><rect x="15" width="5" height="7" fill="#6b93cb"/><rect x="20" width="4" height="7" fill="#a3bfe0"/></g>
<g transform="translate(452 412)"><rect width="5" height="7" fill="#5e2d10"/><rect x="5" width="5" height="7" fill="#7f3f1a"/><rect x="10" width="5" height="7" fill="#a4562c"/><rect x="15" width="5" height="7" fill="#c8714a"/><rect x="20" width="4" height="7" fill="#e09a80"/></g>
<g transform="translate(476 412)"><rect width="5" height="7" fill="#1a6fa8"/><rect x="5" width="5" height="7" fill="#2a8bc8"/><rect x="10" width="5" height="7" fill="#44a5e0"/><rect x="15" width="5" height="7" fill="#6cbcec"/><rect x="20" width="4" height="7" fill="#a5d7f5"/></g>
<g transform="translate(500 412)"><rect width="5" height="7" fill="#7e7468"/><rect x="5" width="5" height="7" fill="#9c9285"/><rect x="10" width="5" height="7" fill="#b9b0a3"/><rect x="15" width="5" height="7" fill="#d5cec2"/><rect x="20" width="4" height="7" fill="#ebe6dc"/></g>
<g transform="translate(524 412)"><rect width="5" height="7" fill="#2d4468"/><rect x="5" width="5" height="7" fill="#49648f"/><rect x="10" width="6" height="7" fill="#6c8ab5"/><rect x="16" width="4" height="7" fill="#111"/><rect x="20" width="5" height="7" fill="#666"/><rect x="25" width="5" height="7" fill="#999"/><rect x="30" width="5" height="7" fill="#c4c4c4"/></g>
</g>

<!-- status bar -->
<rect y="419" width="600" height="15" fill="#2f5597"/>
<text x="6" y="429.500" font-size="6.500" fill="#dfe7f5">https://www.edrawsoft.com</text>
<text x="86" y="429.500" font-size="6.500" fill="#dfe7f5">Page 2/2</text>
<rect x="434.500" y="421.500" width="9" height="10" fill="#8ea8d4"/><rect x="436" y="423.500" width="6" height="6" fill="none" stroke="#dfe7f5" stroke-width=".8"/>
<g fill="none" stroke="#dfe7f5" stroke-width=".8"><path d="M445.500 423.500H451.500V429.500H445.500ZM448 423.500V429.500"/><path d="M455 423.500H461V427H455ZM458 427V430M456 430H460"/></g>
<path d="M465.500 427H469M519.500 427H524.500M522 424.500V429.500" stroke="#dfe7f5" stroke-width=".8"/>
<path d="M473.500 427H518" stroke="#dfe7f5" stroke-width=".8"/><rect x="480.500" y="423.500" width="2.800" height="7" fill="#fff"/>
<text x="531" y="429.500" font-size="6.500" fill="#dfe7f5">75%</text>
<path d="M546.500 426.500L548 428L549.500 426.500" fill="#dfe7f5"/>
<g fill="none" stroke="#dfe7f5" stroke-width=".9"><rect x="554.500" y="423.500" width="5" height="6"/><rect x="563" y="423.500" width="6" height="5.500"/><path d="M565 426H567"/><circle cx="575.500" cy="426" r="2.200"/><path d="M577 428L579.500 430.500"/><path d="M582 423.500H588.500V429.500H582ZM585.200 423.500V429.500"/></g>
</svg>
</body></html>
